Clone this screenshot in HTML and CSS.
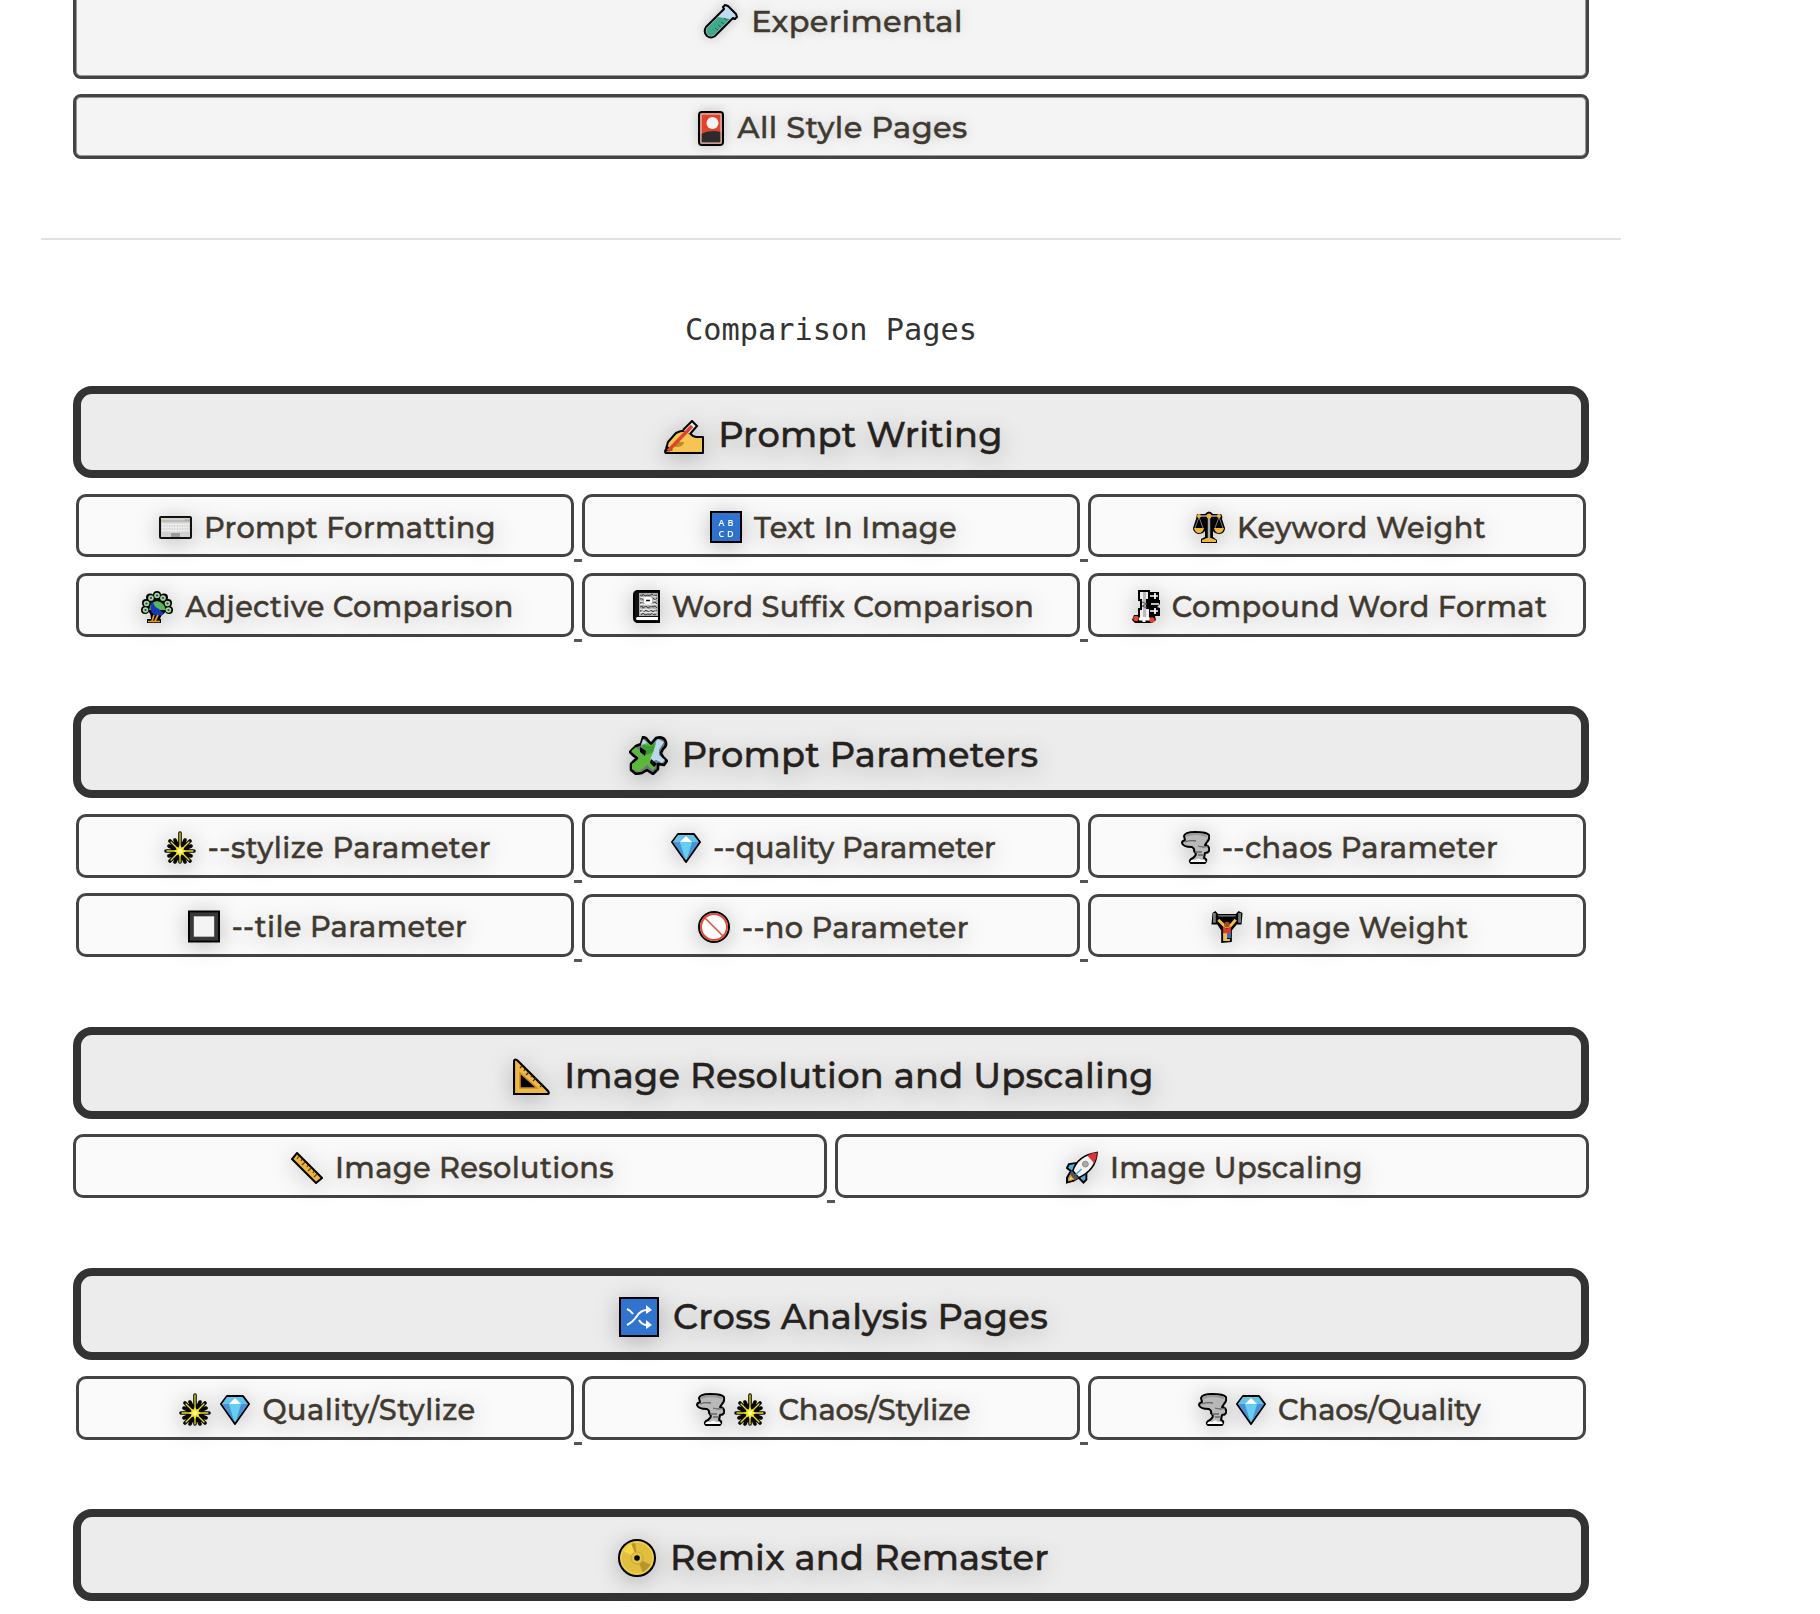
FILE: index.html
```html
<!DOCTYPE html>
<html lang="en">
<head>
<meta charset="utf-8">
<title>Comparison Pages</title>
<link rel="stylesheet" href="styles.css">
</head>
<body>
<svg class="sprite" aria-hidden="true">
  <symbol id="tube" viewBox="0 0 35 35"><path d="M20 3 22 1l3 1 8 8 1 3-2 2-2-1L12 32Q8 35 4 32 0 28 3 23L21 5Z" fill="#bfdcf0" stroke="#000" stroke-width="2" stroke-linejoin="round"/><path d="M15 13 27 15 11 31Q8 33 5 31 2 28 4 24Z" fill="#3fa98a"/><path d="m21 14 3 2m-6 2 3 2m-6 1 3 2m-6 1 3 2" stroke="#236c58" stroke-width="1"/></symbol>
  <symbol id="card" viewBox="0 0 26 35"><rect x="1" y="1" width="24" height="33" rx="3" fill="#e0452b" stroke="#000" stroke-width="2"/><path d="M3 23Q12 18 23 21V32H3Z" fill="#2b2b2b"/><rect x="3" y="3" width="20" height="29" fill="none" stroke="#ddd"/><circle cx="14.5" cy="12" r="6" fill="#f3f3f3"/></symbol>
  <symbol id="hand" viewBox="0 0 40 35"><path d="M4 22 12 13Q18 10 23 11L29 16 32 17H39V33H2Q0 32 2 29Z" fill="#f5c452" stroke="#000" stroke-width="2" stroke-linejoin="round"/><path d="M12 22H20Q20 27 11 27H8Z" fill="#bd8a26"/><path d="M19 10 28 1 33 6 26 14" fill="#e8e8e8" stroke="#000" stroke-width="2"/><path d="M1 32 3 26 9 30Z" fill="#000"/><path d="M4 31 28 6" stroke="#e0452b" stroke-width="3.400"/></symbol>
  <symbol id="keyboard" viewBox="0 0 33 23"><rect x="1" y="1" width="31" height="21" rx="1" fill="#d2d2d2" stroke="#111" stroke-width="2"/><path d="M2 5H31" stroke="#a6a6a6"/><path d="M3 8.5H30M3 11.5H30M3 14.5H30" stroke="#f4f4f4" stroke-width="2" stroke-dasharray="2 .6"/><rect x="12" y="17" width="9" height="4" fill="#9c9c9c"/><path d="M2.500 4h2" stroke="#e9bd39"/><path d="M26 4h2" stroke="#76b65b"/><path d="M29 4h2" stroke="#df6557"/></symbol>
  <symbol id="peacock" viewBox="0 0 32 32"><g fill="#000"><circle cx="4" cy="19" r="4"/><circle cx="5" cy="12" r="4"/><circle cx="9" cy="6.500" r="4"/><circle cx="16" cy="4" r="4"/><circle cx="23" cy="6.500" r="4"/><circle cx="27" cy="12" r="4"/><circle cx="28" cy="19" r="4"/><circle cx="16" cy="14" r="11"/><path d="M9 21h13l-3 7h1v4H6v-4h4z"/></g><g fill="#a5d68c"><circle cx="4.500" cy="19" r="2.800"/><circle cx="5.500" cy="12.500" r="2.800"/><circle cx="10" cy="7" r="2.800"/><circle cx="16" cy="4.500" r="2.800"/><circle cx="22" cy="7" r="2.800"/><circle cx="26.500" cy="12.500" r="2.800"/><circle cx="27.500" cy="19" r="2.800"/></g><path d="M8 19Q9 11 16 10 23 11 25 19Z" fill="#58b857"/><path d="M10 12 12 11Q13 16 18 18L23 23Q17 26 12 23 8 19 10 12Z" fill="#1738b4"/><g fill="#193b9b"><circle cx="4.500" cy="19" r="1.100"/><circle cx="5.500" cy="12.500" r="1.100"/><circle cx="10" cy="7" r="1.100"/><circle cx="16" cy="4.500" r="1.100"/><circle cx="22" cy="7" r="1.100"/><circle cx="26.500" cy="12.500" r="1.100"/><circle cx="27.500" cy="19" r="1.100"/></g><path d="M13 24 11 30M17 24 14 30M7 30.500H19" stroke="#e49a22" stroke-width="1.700"/></symbol>
  <symbol id="letters" viewBox="0 0 32 32"><rect x="1" y="1" width="30" height="30" fill="#3074d0" stroke="#000" stroke-width="2"/><g fill="#fff" font-family="Open Sans" font-weight="600" font-size="9"><text x="8.500" y="15">A</text><text x="17.500" y="15">B</text><text x="8.500" y="26">C</text><text x="17" y="26">D</text></g></symbol>
  <symbol id="notebook" viewBox="0 0 27 33"><path d="M4 1H26V32H4Q1 31 1 28V5Q1 2 4 1Z" fill="#111" stroke="#000" stroke-width="2"/><path d="M6 3H25V26H6Z" fill="#aaa"/><path d="m7 5 2 1 1-2 2 2 3-1 1 1 3-2 2 2 3-1M7 9l2-1 1 2M20 8l2 2 2-2M7 13l2-1 2 2M20 13l2-1 2 2M7 17l2-1 1 2 3-2 2 2 3-2 2 1 2-1 2 2M7 21l2-1 2 2 2-2 3 2 2-2 2 2 2-2 2 1M8 25l2-2 2 2 3-1 2 1 2-2 2 2 2-1" fill="none" stroke="#444"/><path d="m7 7 3 1 2-1M20 6l3 1M7 11l3 1M20 11l3-1M7 15l3-1 3 1 2-1 3 1 3-1 3 1M7 19l3 1 3-1 3 1 3-1 4 1M7 23l3-1 3 1 4-1 3 1 4-1" fill="none" stroke="#eee" stroke-width="1.200"/><path d="M4 27H25V30H4Q2 29 4 27Z" fill="#fff"/><rect x="11" y="7" width="8" height="7" rx="2" fill="#fff"/><path d="M13 10.500H17" stroke="#111" stroke-width="1.500"/></symbol>
  <symbol id="scales" viewBox="0 0 32 32"><path d="M4 3H12Q16-2 20 3H28Q30 5 29 8L32 17Q32 22 27 23 22 23 20 20V26L24 29V32H8V28L12 26V20Q10 23 5 23 0 21 0 17L3 8Z" fill="#000"/><path d="M6 5H26" stroke="#aaa" stroke-width="1.500"/><path d="M6 6 2 17M6 6 10 17M26 6 22 17M26 6 30 17" stroke="#999" stroke-width=".8"/><path d="M16 3V27" stroke="#aaa" stroke-width="2.500"/><g fill="#f2b434"><path d="M1 17H11Q10 22 6 22 2 22 1 17M21 17H31Q30 22 26 22 22 22 21 17M14 27H18L23 29V31H9V29Z"/><circle cx="6" cy="5" r="2"/><circle cx="16" cy="5" r="2.500"/><circle cx="26" cy="5" r="2"/></g></symbol>
  <symbol id="clamp" viewBox="0 0 28 33"><path d="M6 0H18V2H27V10H28V14L25 17 28 18V26H23L24 30 20 33H3L0 30 2 25H6V18H8V11H6Z" fill="#000"/><path d="M8 2H16V9H14V19H17V28H8V20H10V9H8Z" fill="#eee"/><path d="M11 2h3v27h-3z" fill="#bbb"/><path d="m10 12 5 2-5 2 5 2" stroke="#555" fill="none"/><path d="M18 6H26M23 3V9M19 14H27M18 21H26M23 18V24" stroke="#fff" stroke-width="1.700"/><path d="M7 29H18M12 27V32" stroke="#fff" stroke-width="3"/><circle cx="4" cy="28.500" r="2.700" fill="#e6442f"/><circle cx="20" cy="30" r="2.700" fill="#e6442f"/></symbol>
  <symbol id="puzzle" viewBox="0 0 39 39"><path d="M12 8 14 1 17 2 22 8 27 2Q33 0 36 4 39 9 34 13L32 17 34 21 38 25 35 29 29 28 29 33 24 38 18 34 13 37 7 38 2 34 2 28 8 22 5 20 1 16 7 10Z" fill="#6f7478" stroke="#000" stroke-width="2.600" stroke-linejoin="round"/><path d="M12 9 14 3 22 10 29 3 35 6 30 14 30 19 36 24 33 27 27 24 22 26Z" fill="#b9d8ef"/><path d="M2 15 7 11 14 18 17 16 12 9 18 7 22 9 27 7 25 14 23 19 21 24 27 30 24 34 18 29 10 36 3 33 3 28 10 23 8 20Z" fill="#5bb83a"/><path d="m13 9 9 1 5-5-3 11-6 3-4-3Z" fill="#3f9a34"/><path d="m11 11 6 4-1 5-5-4ZM22 23l6 5-3 3-4-4Z" fill="#000"/></symbol>
  <symbol id="burst" viewBox="0 0 32 33"><g fill="none" stroke-linecap="round"><path d="M16 2V31M2 20H30M6 10 26 30M26 10 6 30M11 9 21 31M21 9 11 31M5 15 27 25M27 15 5 25" stroke="#080800" stroke-width="3.600"/><path d="M16 2V31M3 20H29M7 11 25 29M25 11 7 29" stroke="#e9dc2c" stroke-width="1.300"/></g><path d="m16 14 1.500 2.500L20 16l-.5 2.500L22 20l-2.500 1.500.5 2.500-2.500-.5L16 26l-1.500-2.500-2.500.5.500-2.500L10 20l2.500-1.500L12 16l2.500.5Z" fill="#f9e71c"/><circle cx="16" cy="20" r="2.200" fill="#fff9bb"/></symbol>
  <symbol id="diamond" viewBox="0 0 30 30"><path d="M7 1H23L29 9 15 29 1 9Z" fill="#5dc5ee" stroke="#000" stroke-width="2" stroke-linejoin="round"/><path d="M2 9H9L14 26Z" fill="#4b91d5"/><path d="M28 9H21L16 26Z" fill="#4b91d5"/><path d="M9 9H21L15 27Z" fill="#66cef2"/><path d="M7 2H14L9 9H2Z" fill="#67c4e8"/><path d="M15 3 21 9H9Z" fill="#fff"/></symbol>
  <symbol id="tornado" viewBox="0 0 29 33"><path d="M3 5Q4 1 14 1 26 1 28 4 29 8 26 11L24 14Q29 15 28 20 27 22 24 22L23 27Q27 28 24 32H10Q7 29 12 27L14 25Q16 23 13 20 14 18 11 16 2 16 1 12 1 10 4 9Z" fill="#b9b9b9" stroke="#000" stroke-width="2" stroke-linejoin="round"/><path d="M5 5Q14 1 26 5" stroke="#999" stroke-width="2" fill="none"/><path d="M4 11Q9 9 15 10M17 15Q23 17 27 15M14 21H21M17 24H23" stroke="#666" stroke-width="1.300" fill="none"/><path d="M9 31Q10 28 14 29 18 26 20 29 24 28 25 31Z" fill="#fff"/></symbol>
  <symbol id="tile" viewBox="0 0 33 33"><rect x="1" y="1" width="31" height="31" fill="#393939" stroke="#000" stroke-width="2"/><path d="M6 6H27V27H6Z" fill="#f4f4f4"/></symbol>
  <symbol id="no" viewBox="0 0 32 32"><circle cx="16" cy="16" r="15" fill="#fff" stroke="#000" stroke-width="2"/><circle cx="16" cy="16" r="13" fill="none" stroke="#e24a32" stroke-width="2"/><path d="M7 7 26 26" stroke="#e24a32" stroke-width="1.500"/></symbol>
  <symbol id="lifter" viewBox="0 0 32 33"><path d="M1 2 4 0 7 3H25L28 0 32 2 31 14H26L21 20V32L10 33V20L6 14H0Z" fill="#000"/><path d="M7 5H25" stroke="#777" stroke-width="1.500"/><path d="M3 2V12M29 2V12" stroke="#777" stroke-width="3"/><path d="M7 9 14 16H19L25 9" fill="none" stroke="#f4bd47" stroke-width="3"/><circle cx="16" cy="14" r="3" fill="#a94b20"/><path d="M12 16 16 18 20 16V25H12Z" fill="#df3830"/><path d="M12 23H16V29H19V31H12Z" fill="#f1bf48"/><path d="M16 23H20V28H16Z" fill="#2f72c4"/></symbol>
  <symbol id="triangle" viewBox="0 0 37 37"><path d="M1 3Q2 0 5 3L35 33Q37 36 34 36H1Z" fill="#efb746" stroke="#000" stroke-width="2.200"/><path d="M7 15V30H24Z" fill="#000" stroke="#c98d24" stroke-width="1.500"/><path d="m9 8-2 2m5 1-1 2m5 1-3 3m6 0-1 2m5 1-3 3m6 0-1 2m5 1-3 3" stroke="#3d2b13" stroke-width="1.300"/></symbol>
  <symbol id="ruler" viewBox="0 0 32 32"><path d="M6 1 31 26 25 31 1 7Z" fill="#efb53b" stroke="#000" stroke-width="2"/><path d="m8 4-2 3m5 0-1 2m4 1-3 3m6 0-1 2m4 1-3 3m6 0-1 2m4 1-3 3" stroke="#584016" stroke-width="1.200"/></symbol>
  <symbol id="rocket" viewBox="0 0 33 33"><path d="M10 12 3 13 1 17 5 20 1 27V32L8 30 13 27 18 32 21 29V22Z" fill="#51afe3" stroke="#000" stroke-width="2"/><path d="M7 20Q12 4 32 1 31 19 13 27Z" fill="#f3f3f3" stroke="#000" stroke-width="1.700"/><path d="M22 4Q27 1 32 1 32 7 29 12Z" fill="#d93536"/><path d="M6 20 13 27 9 30 4 23Z" fill="#555"/><path d="M4 24 9 29 2 31Z" fill="#f28a1c"/><path d="m5 26 2 2-4 2Z" fill="#ffe053"/><circle cx="20" cy="13" r="3" fill="#aaa" stroke="#888"/><path d="M16 18 10 24" stroke="#43a8df" stroke-width="1.500"/></symbol>
  <symbol id="shuffle" viewBox="0 0 40 40"><rect x="1" y="1" width="38" height="38" fill="#3074d0" stroke="#000" stroke-width="2"/><path d="M8 12Q11 13 14 17M8 28Q14 25 18 19 22 13 28 13M20 23Q23 28 28 28" stroke="#fff" stroke-width="2" fill="none"/><path d="M27 8 33 13 27 17ZM27 23 33 28 27 32Z" fill="#fff"/></symbol>
  <symbol id="disc" viewBox="0 0 38 38"><circle cx="19" cy="19" r="18" fill="#dfbe40" stroke="#000" stroke-width="2"/><path d="M19 19 5 12 13 4Z" fill="#f5d743"/><path d="M19 19 13 4 17 3ZM19 19 33 26 25 34Z" fill="#b89529"/><circle cx="19" cy="19" r="16" fill="none" stroke="#f3d750"/><circle cx="19" cy="19" r="6" fill="#e4c246" stroke="#c9a633"/><circle cx="19" cy="19" r="2.800" fill="#000"/></symbol>
</svg>
<main class="page">
  <div class="bar bar-cut"><svg class="i-tube"><use href="#tube"/></svg><span class="t">Experimental</span></div>
  <div class="bar"><svg class="i-card"><use href="#card"/></svg><span class="t">All Style Pages</span></div>
  <hr class="rule">
  <p class="caption">Comparison Pages</p>

  <section class="group writing">
    <h2 class="head"><svg class="i-hand"><use href="#hand"/></svg><span class="t">Prompt Writing</span></h2>
    <div class="row row-short"><a class="btn"><svg class="i-keyboard"><use href="#keyboard"/></svg><span class="t">Prompt Formatting</span></a><i class="sep"></i><a class="btn"><svg class="i-32"><use href="#letters"/></svg><span class="t">Text In Image</span></a><i class="sep"></i><a class="btn"><svg class="i-32"><use href="#scales"/></svg><span class="t">Keyword Weight</span></a></div>
    <div class="row"><a class="btn"><svg class="i-32"><use href="#peacock"/></svg><span class="t">Adjective Comparison</span></a><i class="sep"></i><a class="btn"><svg class="i-notebook"><use href="#notebook"/></svg><span class="t">Word Suffix Comparison</span></a><i class="sep"></i><a class="btn"><svg class="i-clamp"><use href="#clamp"/></svg><span class="t">Compound Word Format</span></a></div>
  </section>
  <section class="group parameters">
    <h2 class="head"><svg class="i-puzzle"><use href="#puzzle"/></svg><span class="t">Prompt Parameters</span></h2>
    <div class="row"><a class="btn"><svg class="i-33"><use href="#burst"/></svg><span class="t loose">--stylize Parameter</span></a><i class="sep"></i><a class="btn"><svg class="i-diamond"><use href="#diamond"/></svg><span class="t tight">--quality Parameter</span></a><i class="sep"></i><a class="btn"><svg class="i-tornado"><use href="#tornado"/></svg><span class="t">--chaos Parameter</span></a></div>
    <div class="row row-short"><a class="btn btn-tall"><svg class="i-33"><use href="#tile"/></svg><span class="t">--tile Parameter</span></a><i class="sep"></i><a class="btn"><svg class="i-32"><use href="#no"/></svg><span class="t">--no Parameter</span></a><i class="sep"></i><a class="btn"><svg class="i-32"><use href="#lifter"/></svg><span class="t">Image Weight</span></a></div>
  </section>
  <section class="group resolution">
    <h2 class="head"><svg class="i-triangle"><use href="#triangle"/></svg><span class="t">Image Resolution and Upscaling</span></h2>
    <div class="row row-wide"><a class="btn"><svg class="i-32"><use href="#ruler"/></svg><span class="t">Image Resolutions</span></a><i class="sep"></i><a class="btn"><svg class="i-33"><use href="#rocket"/></svg><span class="t">Image Upscaling</span></a></div>
  </section>
  <section class="group analysis">
    <h2 class="head"><svg class="i-shuffle"><use href="#shuffle"/></svg><span class="t">Cross Analysis Pages</span></h2>
    <div class="row"><a class="btn"><svg class="i-33 pair"><use href="#burst"/></svg><svg class="i-diamond"><use href="#diamond"/></svg><span class="t loose">Quality/Stylize</span></a><i class="sep"></i><a class="btn"><svg class="i-tornado pair"><use href="#tornado"/></svg><svg class="i-33"><use href="#burst"/></svg><span class="t tight">Chaos/Stylize</span></a><i class="sep"></i><a class="btn"><svg class="i-tornado pair"><use href="#tornado"/></svg><svg class="i-diamond"><use href="#diamond"/></svg><span class="t tight">Chaos/Quality</span></a></div>
  </section>
  <section class="group">
    <h2 class="head"><svg class="i-disc"><use href="#disc"/></svg><span class="t">Remix and Remaster</span></h2>
  </section>
</main>
</body>
</html>
```
FILE: styles.css
```css
* { box-sizing: border-box; }
body { margin: 0; background: #fff; overflow: hidden; font-family: Montserrat, Inter, "Liberation Sans", sans-serif; font-weight: 500; color: #40392f; }
.sprite { position: absolute; width: 0; height: 0; }
.page { width: 1580px; margin-left: 41px; padding: 0 32px; height: 1614px; overflow: hidden; }
svg { flex: none; overflow: visible; margin-right: 12px; }
.t { -webkit-text-stroke: .45px currentColor; white-space: nowrap; }

.bar { display: flex; align-items: center; justify-content: center; height: 65px; padding-left: 4px; border: 3px solid #434445; border-radius: 8px; background: #f4f4f4; box-shadow: inset 0 0 0 1px #999; font-size: 30.4px; letter-spacing: .4px; line-height: 36px; text-shadow: 0 0 14px rgba(0, 0, 0, .2); }
.bar svg { filter: drop-shadow(0 0 6px rgba(0, 0, 0, .2)); margin-top: 3px; margin-right: 13px; }
.bar .t { padding-top: 3px; }
.bar-cut { align-items: flex-start; height: 89px; margin: -10px 0 15px; padding-top: 11px; }
.bar-cut svg { margin-top: 0; }
.bar-cut .t { padding-top: 0; }
.rule { height: 2px; margin: 79px -32px 0; border: 0; background: #e1e1e1; }
.caption { margin: 71px 0 0; height: 75px; font: 30.3px/38px "DejaVu Sans Mono", monospace; color: #333; text-align: center; }

.writing { height: 320px; }
.parameters { height: 321px; }
.resolution, .analysis { height: 241px; }
.head { display: flex; align-items: center; justify-content: center; height: 92px; margin: 0 0 16px; padding-left: 5px; border: 8px solid #333; border-radius: 19px; background: #ececec; font-size: 35.2px; font-weight: 500; letter-spacing: .25px; line-height: 42px; color: #25211d; text-shadow: 0 5px 24px rgba(0, 0, 0, .3); }
.resolution .head { margin-bottom: 15px; }
.head .t { padding-top: 5px; }
.head svg { margin-top: 6px; margin-right: 14px; filter: drop-shadow(0 4px 11px rgba(0, 0, 0, .25)); }
.head .i-hand { margin-top: 10px; }
.row { display: flex; height: 64px; margin: 0 3px 15px; }
.row-short { height: 63px; margin-bottom: 16px; }
.parameters .row + .row { margin-top: 16px; }
.parameters .row { margin-bottom: 0; }
.row-wide { margin: 0 0 15px; }
.btn { flex: 1 1 0; display: flex; align-items: center; justify-content: center; padding-left: 5px; border: 3px solid #444; border-radius: 10px; background: #fafafa; font-size: 28.8px; letter-spacing: .35px; line-height: 34px; text-shadow: 0 4px 24px rgba(0, 0, 0, .3); }
.btn-tall { margin-top: -1px; }
.btn .t { padding-top: 4px; }
.btn .loose { letter-spacing: .5px; }
.btn .tight { letter-spacing: -.05px; }
.btn svg { margin-top: 3px; filter: drop-shadow(0 3px 11px rgba(0, 0, 0, .25)); }
.btn .pair { margin-right: 9px; }
.sep { width: 8px; height: 3px; margin-top: 66px; background: #555; }
.row-short .sep { margin-top: 65px; }

.i-tube { width: 35px; height: 35px; }
.i-card { width: 26px; height: 35px; }
.i-hand { width: 40px; height: 35px; }
.i-keyboard { width: 33px; height: 23px; }
.i-32 { width: 32px; height: 32px; }
.i-33 { width: 32px; height: 33px; }
.i-notebook { width: 27px; height: 33px; }
.i-clamp { width: 28px; height: 33px; }
.i-puzzle { width: 39px; height: 39px; }
.i-diamond { width: 30px; height: 30px; }
.i-tornado { width: 29px; height: 33px; }
.i-triangle { width: 37px; height: 37px; }
.i-shuffle { width: 40px; height: 40px; }
.i-disc { width: 38px; height: 38px; }
```
